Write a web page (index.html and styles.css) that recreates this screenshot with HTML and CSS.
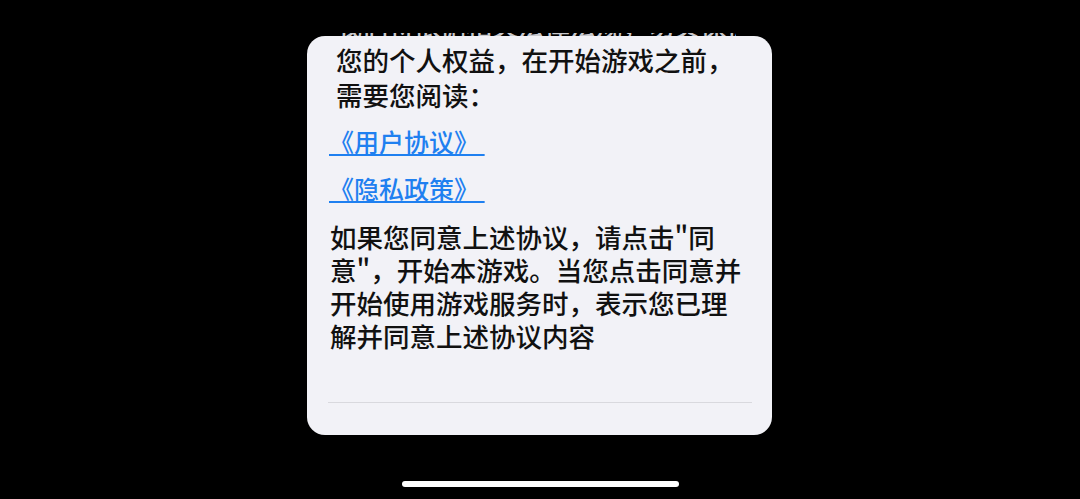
FILE: index.html
```html
<!DOCTYPE html>
<html lang="zh-CN">
<head>
<meta charset="utf-8">
<title>用户协议</title>
<link rel="stylesheet" href="styles.css">
</head>
<body>
<main class="screen">
  <div class="peek"><p class="peek-text">我们将依据相关法律法规，切实保护好</p></div>
  <section class="card">
    <p class="intro">您的个人权益，在开始游戏之前，需要您阅读：</p>
    <p class="link-row"><a class="link" href="#">《用户协议》&nbsp;</a></p>
    <p class="link-row"><a class="link" href="#">《隐私政策》&nbsp;</a></p>
    <p class="body">如果您同意上述协议，请点击"同意"，开始本游戏。当您点击同意并开始使用游戏服务时，表示您已理解并同意上述协议内容</p>
    <div class="divider"></div>
  </section>
  <div class="home"></div>
</main>
</body>
</html>
```

FILE: styles.css
```css
html, body {
  margin: 0;
  padding: 0;
  background: #000;
}
body {
  width: 1080px;
  height: 499px;
  overflow: hidden;
  font-family: "Noto Sans CJK SC", "Noto Sans", sans-serif;
}
.screen {
  display: flex;
  flex-direction: column;
  padding-top: 33px;
}
.peek {
  margin-left: 336px;
  width: 400px;
  height: 3px;
  overflow: hidden;
}
.peek-text {
  margin: -8px 0 0 0;
  font-size: 26px;
  line-height: 0;
  font-weight: 500;
  color: #c8c8cc;
  white-space: nowrap;
}
.card {
  margin-left: 307px;
  width: 465px;
  height: 399px;
  box-sizing: border-box;
  background: #f2f2f7;
  border-radius: 18px;
  padding-top: 6px;
  display: flex;
  flex-direction: column;
}
.intro {
  margin: 0 0 0 29px;
  width: 410px;
  font-size: 26.5px;
  line-height: 35px;
  font-weight: 500;
  color: #111;
}
.link-row {
  margin: 13px 0 0 22px;
  font-size: 25px;
  line-height: 32px;
  font-weight: 500;
}
.link-row + .link-row {
  margin-top: 15px;
}
.link {
  color: #1f80f0;
  text-decoration: underline;
  text-decoration-thickness: 2px;
  text-underline-offset: 2px;
}
.body {
  margin: 16px 0 0 23px;
  width: 418px;
  font-size: 26.5px;
  line-height: 33px;
  font-weight: 500;
  color: #111;
}
.divider {
  margin: 50px 20px 0 21px;
  height: 1px;
  background: #d9d9de;
}
.home {
  margin: 46px 0 0 402px;
  width: 277px;
  height: 6px;
  border-radius: 3px;
  background: #fff;
}
```
